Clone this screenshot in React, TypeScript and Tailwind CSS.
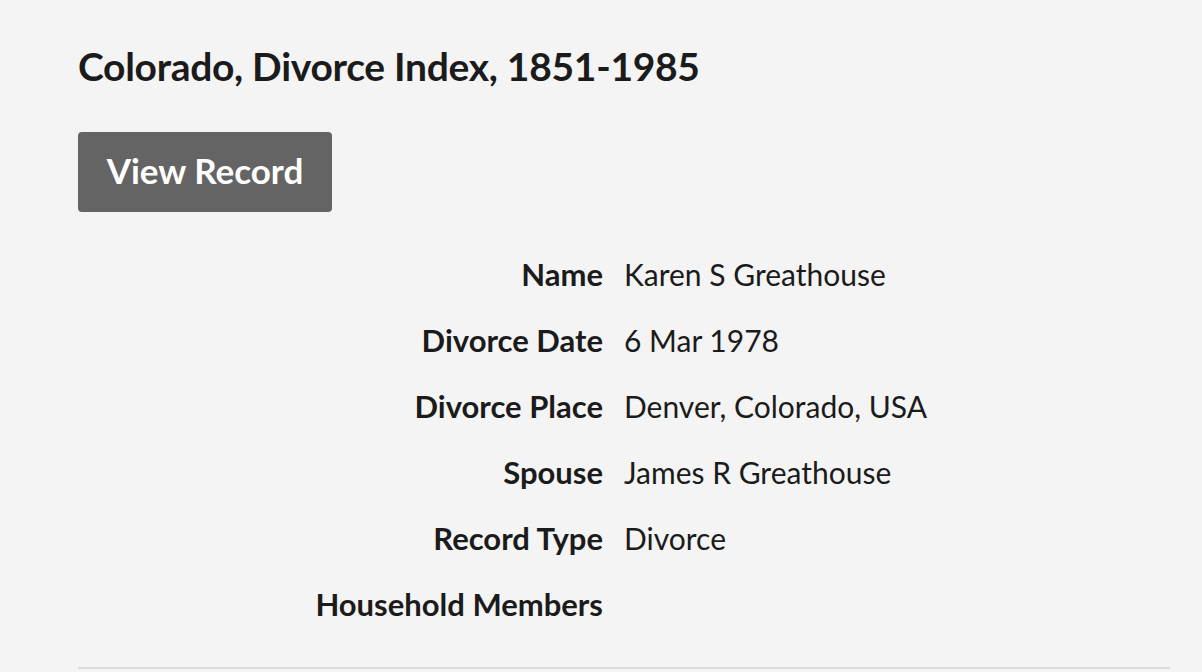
import React from "react";

const rows: [string, string][] = [
  ["Name", "Karen S Greathouse"],
  ["Divorce Date", "6 Mar 1978"],
  ["Divorce Place", "Denver, Colorado, USA"],
  ["Spouse", "James R Greathouse"],
  ["Record Type", "Divorce"],
  ["Household Members", ""],
];

export default function App() {
  return (
    <div
      className="min-h-[672px] w-full bg-[#f4f4f4] pl-[78px] pr-[32px] pt-[42px] text-[#1b1b1b]"
      style={{ fontFamily: "Lato, 'Noto Sans', sans-serif" }}
    >
      <h1 className="h-[48px] text-[39px] font-bold leading-[48px] tracking-[-0.3px]">
        Colorado, Divorce Index, 1851-1985
      </h1>
      <button className="mt-[42px] flex h-[80px] w-[254px] items-center justify-center rounded-[4px] bg-[#646464] pb-[3px] text-[35px] font-bold text-white">
        View Record
      </button>
      <div className="mt-[29px] grid grid-cols-[525px_1fr] gap-x-[21px]">
        {rows.map(([label, value]) => (
          <React.Fragment key={label}>
            <div className="flex h-[66px] items-center justify-end text-[31px] font-bold">
              {label}
            </div>
            <div className="flex h-[66px] items-center text-[30px]">{value}</div>
          </React.Fragment>
        ))}
      </div>
      <div className="mt-[30px] border-t-2 border-[#dcdcdc]" />
    </div>
  );
}
